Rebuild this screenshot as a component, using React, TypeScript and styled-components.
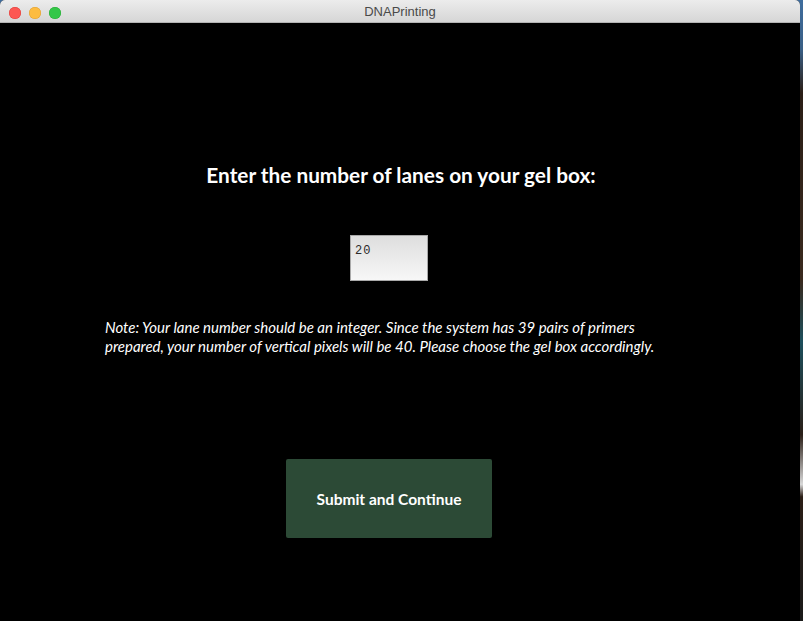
import styled, { createGlobalStyle } from 'styled-components'

const GlobalStyle = createGlobalStyle`
  html, body {
    margin: 0;
    padding: 0;
    background: #3d6a9a;
  }
  body {
    width: 803px;
    height: 621px;
    overflow: hidden;
  }
`

const Desktop = styled.div`
  display: flex;
  width: 803px;
  height: 621px;
  background: linear-gradient(180deg, #3f6d9e 0%, #3a5f85 8%, #2b1e16 15%, #3a2a1e 45%, #1d4f5c 55%, #2a1f18 70%, #d8d8d8 78%, #2b1e16 80%, #1a1a1a 100%);
`

const Window = styled.div`
  display: flex;
  flex-direction: column;
  width: 800px;
  height: 621px;
  border-radius: 5px 5px 0 0;
  overflow: hidden;
  background: #000;
`

const TitleBar = styled.div`
  position: relative;
  display: flex;
  align-items: center;
  justify-content: center;
  height: 22px;
  flex-shrink: 0;
  background: linear-gradient(180deg, #ececec 0%, #d6d6d6 100%);
  border-bottom: 1px solid #b4b4b4;
  font-family: 'Liberation Sans', Arial, sans-serif;
  font-size: 13px;
  color: #4a4a4a;
`

const Lights = styled.div`
  position: absolute;
  left: 9px;
  top: 7px;
  display: flex;
  gap: 8px;
`

const Light = styled.span<{ $color: string; $edge: string }>`
  width: 12px;
  height: 12px;
  border-radius: 50%;
  background: ${(p) => p.$color};
  box-shadow: inset 0 0 0 0.5px ${(p) => p.$edge};
`

const Content = styled.div`
  flex: 1;
  display: flex;
  flex-direction: column;
  align-items: center;
  font-family: Lato, 'Open Sans', sans-serif;
  color: #fff;
`

const Heading = styled.h1`
  margin: 137px 0 0 2px;
  font-size: 20.8px;
  font-weight: 700;
  line-height: 30px;
`

const NumberInput = styled.input`
  box-sizing: border-box;
  margin: 45px 22px 0 0;
  width: 78px;
  height: 46px;
  padding: 4px 4px 18px;
  border: 1px solid #a9a9a9;
  background: linear-gradient(180deg, #dedede 0%, #f7f7f7 100%);
  font-family: 'Liberation Mono', 'DejaVu Sans Mono', monospace;
  font-size: 12px;
  color: #2a2a2a;
  letter-spacing: 1px;
  line-height: 16px;
  outline: none;
`

const Note = styled.p`
  align-self: flex-start;
  margin: 37px 0 0 105px;
  width: 560px;
  font-size: 15px;
  font-style: italic;
  line-height: 19px;
`

const Submit = styled.button`
  margin: 103px 22px 0 0;
  width: 206px;
  height: 79px;
  border: none;
  border-radius: 2px;
  background: #2c4a36;
  color: #fff;
  font-family: Lato, 'Open Sans', sans-serif;
  font-size: 15.5px;
  font-weight: 700;
  cursor: pointer;
`

export default function App() {
  return (
    <>
      <GlobalStyle />
      <Desktop>
        <Window>
          <TitleBar>
            <Lights>
              <Light $color="#fc5753" $edge="#df3d39" />
              <Light $color="#fdbc40" $edge="#de9f34" />
              <Light $color="#33c748" $edge="#27aa35" />
            </Lights>
            DNAPrinting
          </TitleBar>
          <Content>
            <Heading>Enter the number of lanes on your gel box:</Heading>
            <NumberInput type="text" defaultValue="20" />
            <Note>
              Note: Your lane number should be an integer. Since the system has 39 pairs of primers
              prepared, your number of vertical pixels will be 40. Please choose the gel box accordingly.
            </Note>
            <Submit>Submit and Continue</Submit>
          </Content>
        </Window>
      </Desktop>
    </>
  )
}
